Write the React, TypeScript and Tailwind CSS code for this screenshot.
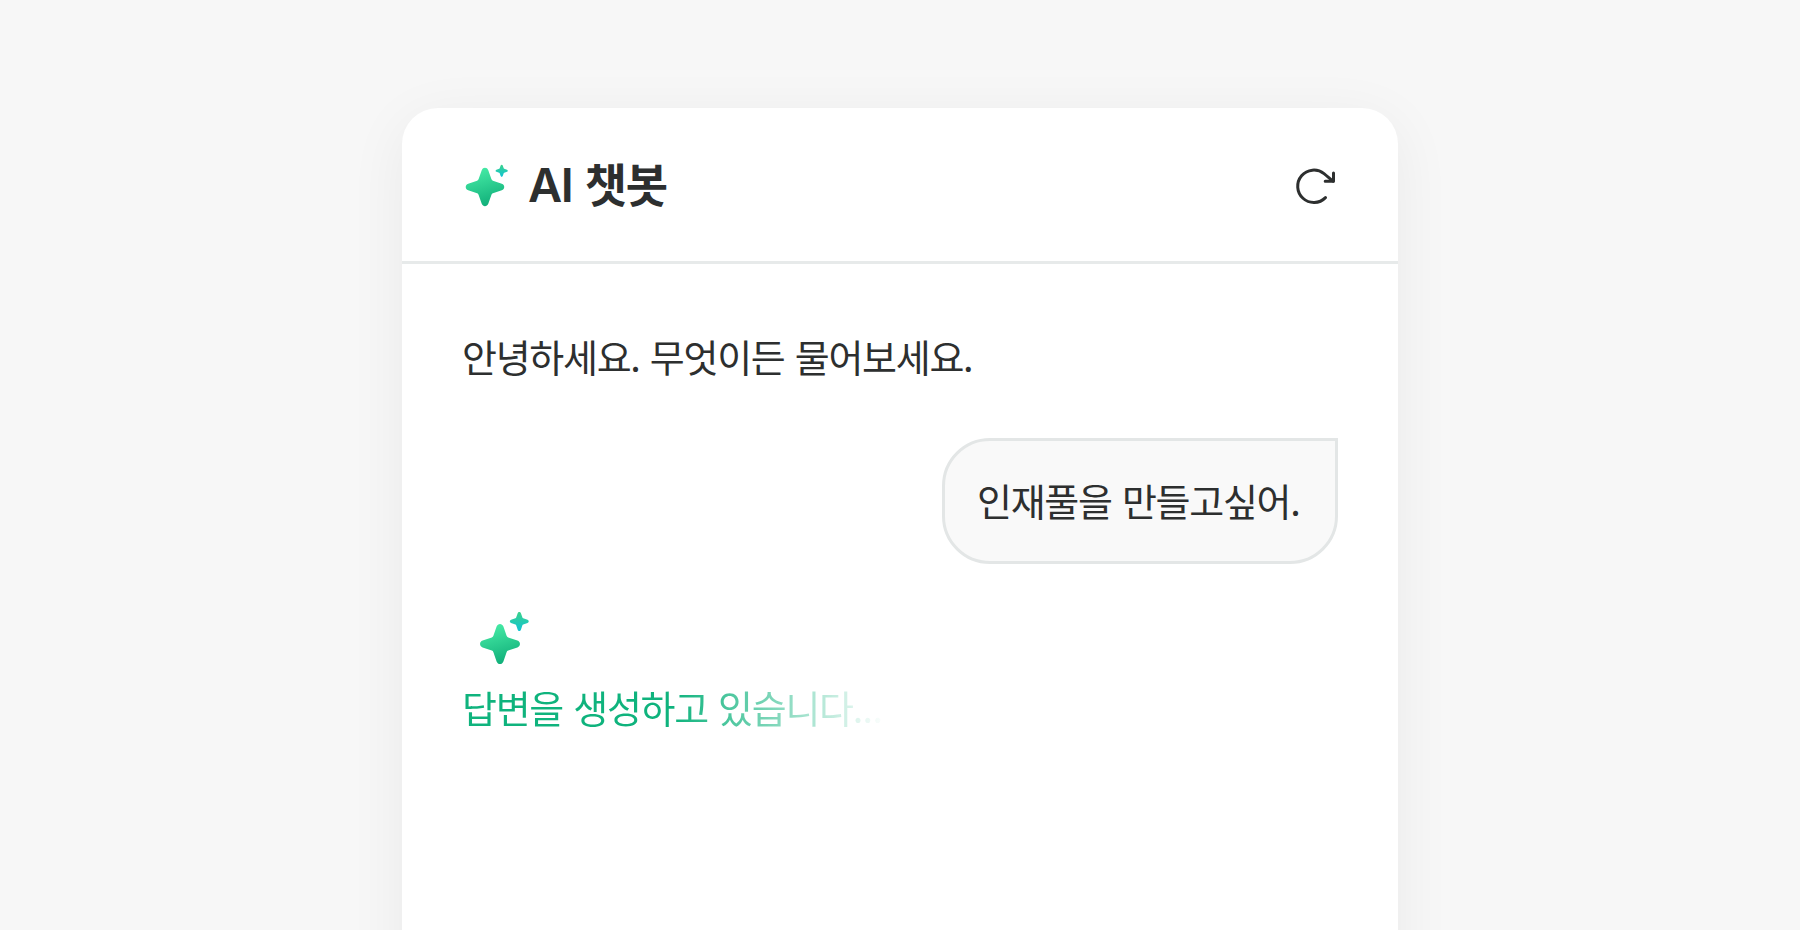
import { useId } from 'react';

const FONT = "font-['Noto_Sans_CJK_KR','Noto_Sans',sans-serif]";

function Sparkle({ cx, cy, r, fill }: { cx: number; cy: number; r: number; fill: string }) {
  // unit star: four rounded tips with a waist near the centre
  return (
    <path
      transform={`translate(${cx} ${cy}) scale(${r})`}
      fill={fill}
      d="M-.17 -.87C-.11 -1.04 .11 -1.04 .17 -.87L.33 -.41Q.35 -.35 .41 -.33L.87 -.17C1.04 -.11 1.04 .11 .87 .17L.41 .33Q.35 .35 .33 .41L.17 .87C.11 1.04 -.11 1.04 -.17 .87L-.33 .41Q-.35 .35 -.41 .33L-.87 .17C-1.04 .11 -1.04 -.11 -.87 -.17L-.41 -.33Q-.35 -.35 -.33 -.41Z"
    />
  );
}

function SparklesIcon({ size, small }: { size: number; small: { cx: number; cy: number; r: number } }) {
  const id = useId();
  const r = size / 2;

  return (
    <svg width="60" height="60" viewBox="0 0 60 60" className="shrink-0">
      <defs>
        <linearGradient id={`${id}-big`} x1="0.35" y1="0" x2="0.65" y2="1">
          <stop stopColor="#46EBA6" />
          <stop offset="1" stopColor="#0FAD78" />
        </linearGradient>
        <linearGradient id={`${id}-small`} x1="0.5" y1="0" x2="0.5" y2="1">
          <stop stopColor="#3BD28B" />
          <stop offset="1" stopColor="#10C4D4" />
        </linearGradient>
      </defs>
      <Sparkle cx={23} cy={37} r={r} fill={`url(#${id}-big)`} />
      <Sparkle {...small} fill={`url(#${id}-small)`} />
    </svg>
  );
}

function RefreshIcon() {
  return (
    <svg
      width="48"
      height="48"
      viewBox="0 0 48 48"
      fill="none"
      stroke="#2D2F2F"
      strokeWidth="3"
      strokeLinecap="round"
      strokeLinejoin="round"
    >
      <path d="M35.5 35.6A16.2 16.2 0 1 1 34 11.6C36.8 13.8 39.6 16.4 43 19.2" />
      <path d="M43.5 11V19.2H35.2" />
    </svg>
  );
}

function Header() {
  return (
    <header className="flex h-[156px] items-center justify-between border-b-[3px] border-[#e7eaea] px-[60px]">
      <div className="flex items-center">
        <div className="mb-[10px]">
          <SparklesIcon size={38.6} small={{ cx: 39.7, cy: 20.8, r: 6.1 }} />
        </div>
        <h1 className="mb-[3px] ml-[6px] text-[46px] leading-[60px] font-bold tracking-[-0.025em] [word-spacing:3px]">
          <span className="font-[Inter] text-[47px] font-semibold tracking-[-0.03em]">AI</span> 챗봇
        </h1>
      </div>
      <button type="button" aria-label="새로고침" className="mt-[3px]">
        <RefreshIcon />
      </button>
    </header>
  );
}

export default function App() {
  return (
    <div className={`flex h-[930px] justify-center overflow-hidden bg-[#f7f7f7] pt-[108px] text-[#2d2f2f] ${FONT}`}>
      <section className="h-[960px] w-[996px] rounded-t-[36px] bg-white shadow-[0_12px_60px_rgba(0,0,0,0.06)]">
        <Header />
        <main className="flex flex-col px-[60px] pt-[65px] text-[38px] leading-[54px] tracking-[-0.034em] [word-spacing:3px]">
          <p className="whitespace-nowrap">안녕하세요. 무엇이든 물어보세요.</p>
          <div className="mt-[55px] flex h-[126px] w-[396px] self-end rounded-[48px] rounded-tr-none border-[3px] border-[#e3e6e6] bg-[#f9f9f9] pt-8 pl-8">
            <p className="whitespace-nowrap">인재풀을 만들고싶어.</p>
          </div>
          <div className="mt-[43px] ml-[15px] h-[60px]">
            <SparklesIcon size={40} small={{ cx: 42.3, cy: 14.4, r: 9.5 }} />
          </div>
          <p className="mt-[13px] w-[424px] whitespace-nowrap bg-[linear-gradient(90deg,#0fb37d_50%,transparent)] bg-clip-text text-transparent">
            답변을 생성하고 있습니다<span className="tracking-[-0.02em]">...</span>
          </p>
        </main>
      </section>
    </div>
  );
}
